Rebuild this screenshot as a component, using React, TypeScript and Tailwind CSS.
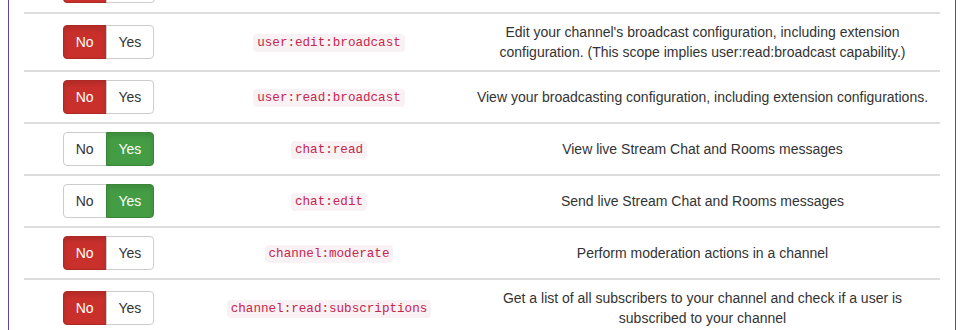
import React from "react";

type Scope = { name: string; desc: string; on: boolean };

const scopes: Scope[] = [
  {
    name: "user:edit:broadcast",
    desc: "Edit your channel's broadcast configuration, including extension configuration. (This scope implies user:read:broadcast capability.)",
    on: false,
  },
  {
    name: "user:read:broadcast",
    desc: "View your broadcasting configuration, including extension configurations.",
    on: false,
  },
  { name: "chat:read", desc: "View live Stream Chat and Rooms messages", on: true },
  { name: "chat:edit", desc: "Send live Stream Chat and Rooms messages", on: true },
  { name: "channel:moderate", desc: "Perform moderation actions in a channel", on: false },
  {
    name: "channel:read:subscriptions",
    desc: "Get a list of all subscribers to your channel and check if a user is subscribed to your channel",
    on: false,
  },
];

function Toggle({ on }: { on: boolean }) {
  const base = "h-[34px] px-3 border text-[14px] leading-5";
  return (
    <div className="inline-flex">
      <button
        className={`${base} rounded-l-[4px] ${
          on
            ? "bg-white border-[#ccc] text-[#333]"
            : "bg-[#c9302c] border-[#ac2925] text-white shadow-[inset_0_3px_5px_rgba(0,0,0,0.125)]"
        }`}
      >
        No
      </button>
      <button
        className={`${base} -ml-px rounded-r-[4px] ${
          on
            ? "bg-[#449d44] border-[#398439] text-white shadow-[inset_0_3px_5px_rgba(0,0,0,0.125)]"
            : "bg-white border-[#ccc] text-[#333]"
        }`}
      >
        Yes
      </button>
    </div>
  );
}

export default function App() {
  return (
    <div
      className="h-[330px] overflow-hidden bg-white text-[#333] text-[14px] leading-5"
      style={{ fontFamily: '"Liberation Sans", Arial, sans-serif' }}
    >
      <div className="ml-2 w-[948px] h-full flex flex-col border-x border-[#6441a5] px-[15px]">
        {/* bottom edge of the row scrolled above the view */}
        <div className="shrink-0 h-[12px] overflow-hidden grid grid-cols-[169px_272px_475px]">
          <div className="flex justify-center">
            <div className="-mt-[31px] flex">
              <div className="w-[44px] h-[34px] rounded-l-[4px] bg-[#c9302c] border border-[#ac2925]" />
              <div className="w-[49px] h-[34px] -ml-px rounded-r-[4px] bg-white border border-[#ccc]" />
            </div>
          </div>
        </div>
        {scopes.map((s) => (
          <div
            key={s.name}
            className="shrink-0 grid grid-cols-[169px_272px_475px] items-center border-t-2 border-[#ddd]"
          >
            <div className="p-2 flex justify-center">
              <Toggle on={s.on} />
            </div>
            <div className="p-2 text-center">
              <code
                className="px-1 py-[2px] rounded-[4px] bg-[#f9f2f4] text-[#c7254e] text-[12.6px]"
                style={{ fontFamily: '"Liberation Mono", "Courier New", monospace' }}
              >
                {s.name}
              </code>
            </div>
            <div className="p-2 text-center">{s.desc}</div>
          </div>
        ))}
      </div>
    </div>
  );
}
